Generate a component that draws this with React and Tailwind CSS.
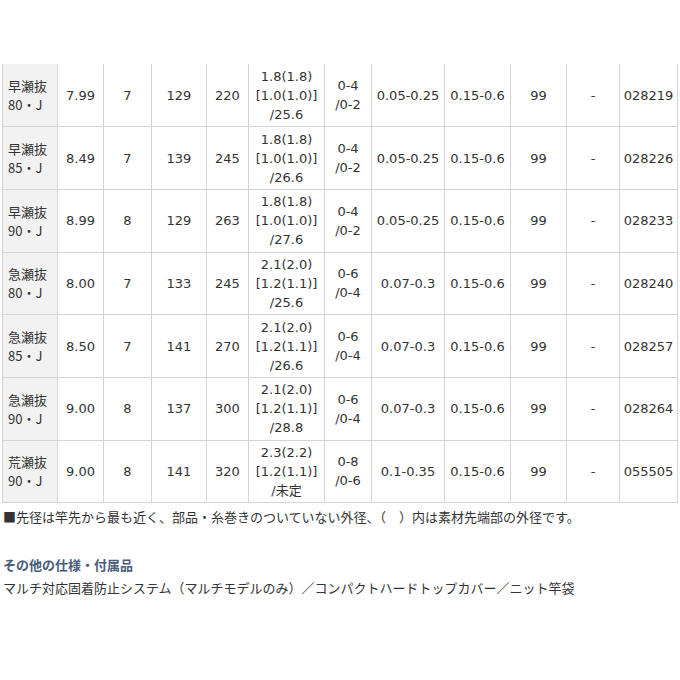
const rows = [
  ["早瀬抜", "80・J", "7.99", "7", "129", "220", ["1.8(1.8)", "[1.0(1.0)]", "/25.6"], ["0-4", "/0-2"], "0.05-0.25", "0.15-0.6", "99", "-", "028219"],
  ["早瀬抜", "85・J", "8.49", "7", "139", "245", ["1.8(1.8)", "[1.0(1.0)]", "/26.6"], ["0-4", "/0-2"], "0.05-0.25", "0.15-0.6", "99", "-", "028226"],
  ["早瀬抜", "90・J", "8.99", "8", "129", "263", ["1.8(1.8)", "[1.0(1.0)]", "/27.6"], ["0-4", "/0-2"], "0.05-0.25", "0.15-0.6", "99", "-", "028233"],
  ["急瀬抜", "80・J", "8.00", "7", "133", "245", ["2.1(2.0)", "[1.2(1.1)]", "/25.6"], ["0-6", "/0-4"], "0.07-0.3", "0.15-0.6", "99", "-", "028240"],
  ["急瀬抜", "85・J", "8.50", "7", "141", "270", ["2.1(2.0)", "[1.2(1.1)]", "/26.6"], ["0-6", "/0-4"], "0.07-0.3", "0.15-0.6", "99", "-", "028257"],
  ["急瀬抜", "90・J", "9.00", "8", "137", "300", ["2.1(2.0)", "[1.2(1.1)]", "/28.8"], ["0-6", "/0-4"], "0.07-0.3", "0.15-0.6", "99", "-", "028264"],
  ["荒瀬抜", "90・J", "9.00", "8", "141", "320", ["2.3(2.2)", "[1.2(1.1)]", "/未定"], ["0-8", "/0-6"], "0.1-0.35", "0.15-0.6", "99", "-", "055505"],
];

const widths = ["w-[55px]", "w-[46px]", "w-[48px]", "w-[55px]", "w-[42px]", "w-[76px]", "w-[47px]", "w-[73px]", "w-[66px]", "w-[56px]", "w-[53px]", "w-[58px]"];

function Lines({ items }) {
  return items.map((t, i) => (
    <div key={i}>{t}</div>
  ));
}

export default function App() {
  return (
    <div className="w-[680px] h-[680px] bg-white text-[#333] text-[13px] font-['DejaVu_Sans','Noto_Sans_CJK_JP',sans-serif]">
      <div className="pt-[64px] pl-[2px]">
        <table className="table-fixed border-collapse leading-[19px]">
          <colgroup>
            {widths.map((w, i) => (
              <col key={i} className={w} />
            ))}
          </colgroup>
          <tbody>
            {rows.map((r, i) => (
              <tr key={i} className="h-[62.7px]">
                <td className={`border border-[#d4d4d4] bg-[#f2f2f2] px-[5px] text-left font-['Noto_Sans_CJK_JP',sans-serif] ${i === 0 ? "border-t-0" : ""}`}>
                  <div>{r[0]}</div>
                  <div>{r[1]}</div>
                </td>
                {r.slice(2).map((c, j) => (
                  <td
                    key={j}
                    className={`border border-[#d4d4d4] p-0 whitespace-nowrap text-center ${i === 0 ? "border-t-0" : ""}`}
                  >
                    {Array.isArray(c) ? <Lines items={c} /> : c}
                  </td>
                ))}
              </tr>
            ))}
          </tbody>
        </table>
      </div>
      <div className="font-['Noto_Sans_CJK_JP',sans-serif] text-[13px] pl-[3px]">
        <p className="mt-[4px] leading-[20px]">■先径は竿先から最も近く、部品・糸巻きのついていない外径、（　）内は素材先端部の外径です。</p>
        <p className="mt-[28px] leading-[20px] font-bold text-[#4b5b79]">その他の仕様・付属品</p>
        <p className="mt-[3px] leading-[20px]">マルチ対応固着防止システム（マルチモデルのみ）／コンパクトハードトップカバー／ニット竿袋</p>
      </div>
    </div>
  );
}
